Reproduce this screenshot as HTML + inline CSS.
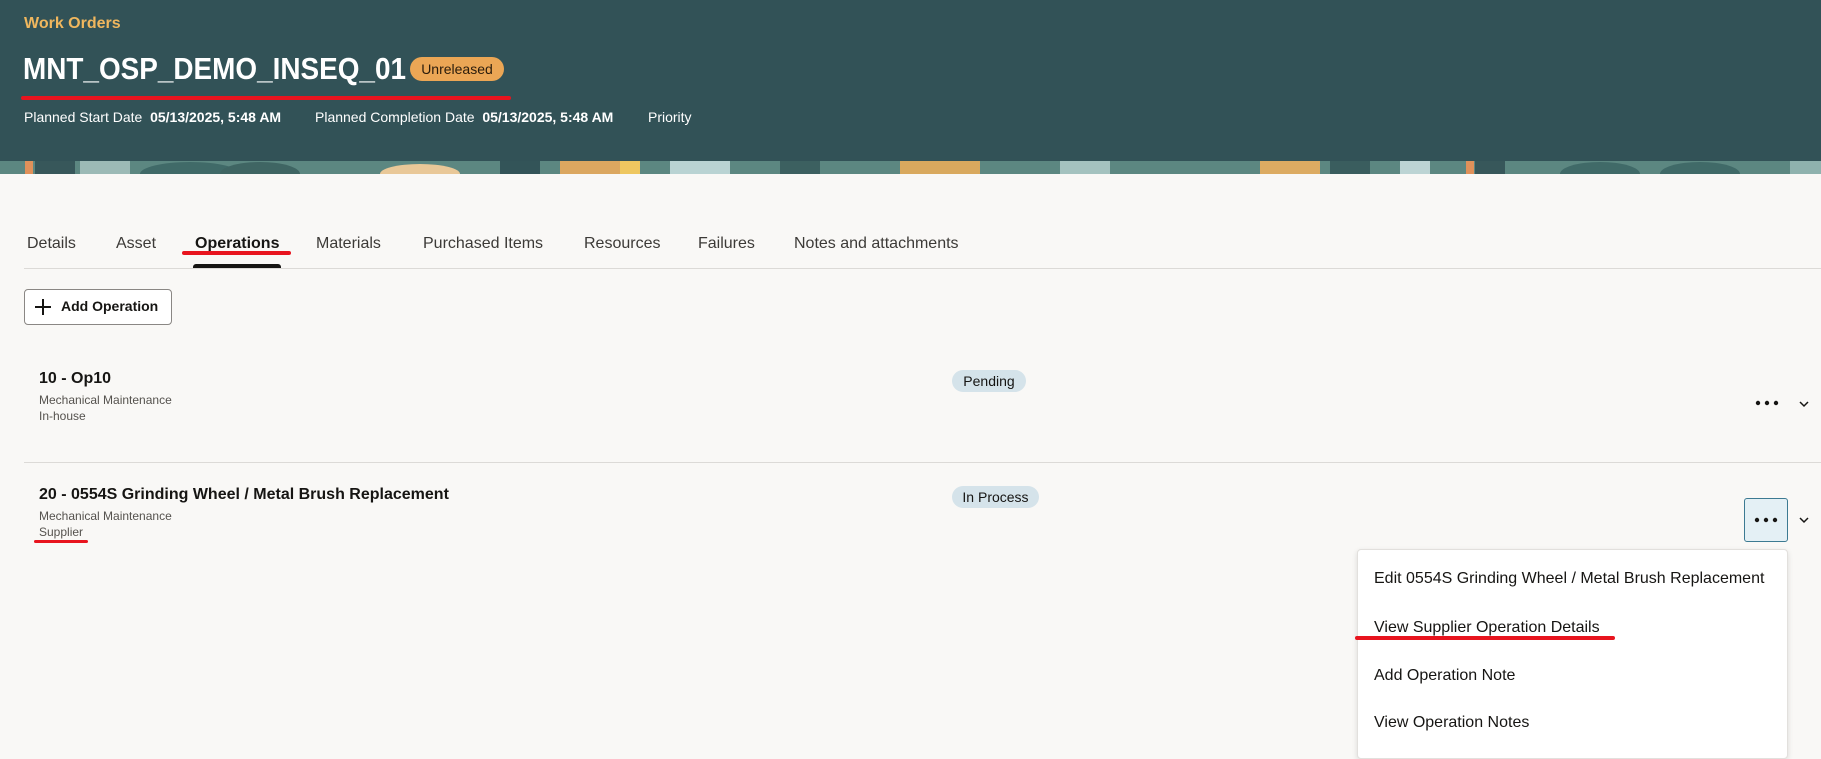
<!DOCTYPE html>
<html><head><meta charset="utf-8"><style>
*{margin:0;padding:0;box-sizing:border-box}
body{width:1821px;height:746px;overflow:hidden;background:#f9f8f6;font-family:"Liberation Sans",sans-serif;color:#161513;position:relative}
.hdr{position:absolute;left:0;top:0;width:1821px;height:161px;background:#325257}
.ban{position:absolute;left:0;top:161px;width:1821px;height:13px;background:#5a8580;overflow:hidden}
.a{position:absolute;white-space:nowrap}
.tab{position:absolute;top:235px;font-size:16px;color:#3c3a37}
.sub{font-size:12px;color:#55524e}
.menu div{position:absolute;left:16px;font-size:16px;color:#161513;white-space:nowrap}
.red{position:absolute;background:#e8141e;height:3px;border-radius:2px}
</style></head><body>
<div class="hdr"></div>
<div class="ban">
<svg width="1821" height="13">
<rect x="0" y="0" width="1821" height="13" fill="#5c8781"/>
<rect x="25" y="0" width="8" height="13" fill="#e0915a"/>
<rect x="35" y="0" width="40" height="13" fill="#37575a"/>
<rect x="80" y="0" width="50" height="13" fill="#9cbab6"/>
<ellipse cx="190" cy="13" rx="50" ry="12" fill="#406a68"/>
<ellipse cx="260" cy="13" rx="40" ry="12" fill="#3f6563"/>
<ellipse cx="420" cy="13" rx="40" ry="10" fill="#e9c898"/>
<rect x="500" y="0" width="40" height="13" fill="#335458"/>
<rect x="560" y="0" width="60" height="13" fill="#dba760"/>
<rect x="620" y="0" width="20" height="13" fill="#eec760"/>
<rect x="670" y="0" width="60" height="13" fill="#b9d3d3"/>
<rect x="780" y="0" width="40" height="13" fill="#3c6060"/>
<rect x="900" y="0" width="80" height="13" fill="#d9a95e"/>
<rect x="1060" y="0" width="50" height="13" fill="#a4c2bf"/>
<rect x="1260" y="0" width="60" height="13" fill="#dcab62"/>
<rect x="1330" y="0" width="40" height="13" fill="#3a5d5e"/>
<rect x="1400" y="0" width="30" height="13" fill="#bcd4d4"/>
<rect x="1466" y="0" width="8" height="13" fill="#e0915a"/>
<rect x="1475" y="0" width="30" height="13" fill="#37575a"/>
<ellipse cx="1600" cy="13" rx="40" ry="12" fill="#406a68"/>
<ellipse cx="1700" cy="13" rx="40" ry="12" fill="#406a68"/>
<rect x="1790" y="0" width="31" height="13" fill="#8fb2ae"/>
</svg></div>

<div class="a" style="left:24px;top:15px;font-size:16px;font-weight:bold;color:#f0b75e">Work Orders</div>
<div class="a" style="left:23px;top:51px;font-size:31px;font-weight:bold;color:#fff;transform:scaleX(0.9);transform-origin:0 0">MNT_OSP_DEMO_INSEQ_01</div>
<div class="a" style="left:410px;top:57px;width:94px;height:24px;border-radius:12px;background:#eba655;font-size:14px;line-height:24px;text-align:center;color:#2a1c0c">Unreleased</div>
<div class="red" style="left:21px;top:96px;width:490px;height:4px"></div>
<div class="a" style="left:24px;top:109px;font-size:14px;color:#fff">Planned Start Date&nbsp; <b>05/13/2025, 5:48 AM</b></div>
<div class="a" style="left:315px;top:109px;font-size:14px;color:#fff">Planned Completion Date&nbsp; <b>05/13/2025, 5:48 AM</b></div>
<div class="a" style="left:648px;top:109px;font-size:14px;color:#fff">Priority</div>

<div class="tab" style="left:27px">Details</div>
<div class="tab" style="left:116px">Asset</div>
<div class="tab" style="left:195px;color:#161513;font-weight:bold">Operations</div>
<div class="tab" style="left:316px">Materials</div>
<div class="tab" style="left:423px">Purchased Items</div>
<div class="tab" style="left:584px">Resources</div>
<div class="tab" style="left:698px">Failures</div>
<div class="tab" style="left:794px">Notes and attachments</div>
<div class="red" style="left:182px;top:251px;width:109px;height:4px"></div>
<div class="a" style="left:193px;top:264px;width:88px;height:4px;background:#161513;border-radius:3px 3px 0 0"></div>
<div class="a" style="left:24px;top:268px;width:1797px;height:1px;background:#dcdad7"></div>

<div class="a" style="left:24px;top:289px;width:148px;height:36px;border:1px solid #8a8784;border-radius:4px;background:#fff"></div>
<svg class="a" style="left:34px;top:298px" width="18" height="18"><path d="M9 1V17M1 9H17" stroke="#161513" stroke-width="2"/></svg>
<div class="a" style="left:61px;top:298px;font-size:14px;font-weight:bold">Add Operation</div>

<div class="a" style="left:39px;top:370px;font-size:16px;font-weight:bold">10 - Op10</div>
<div class="a sub" style="left:39px;top:393px">Mechanical Maintenance</div>
<div class="a sub" style="left:39px;top:409px">In-house</div>
<div class="a" style="left:952px;top:370px;width:74px;height:22px;border-radius:11px;background:#d5e3ea;font-size:14px;line-height:22px;text-align:center">Pending</div>
<svg class="a" style="left:1755px;top:400px" width="24" height="6"><circle cx="3" cy="3" r="2.2" fill="#161513"/><circle cx="12" cy="3" r="2.2" fill="#161513"/><circle cx="21" cy="3" r="2.2" fill="#161513"/></svg>
<svg class="a" style="left:1798px;top:400px" width="12" height="8"><path d="M2 2L6 6L10 2" stroke="#161513" stroke-width="1.5" fill="none"/></svg>
<div class="a" style="left:24px;top:462px;width:1797px;height:1px;background:#dcdad7"></div>

<div class="a" style="left:39px;top:486px;font-size:16px;font-weight:bold">20 - 0554S Grinding Wheel / Metal Brush Replacement</div>
<div class="a sub" style="left:39px;top:509px">Mechanical Maintenance</div>
<div class="a sub" style="left:39px;top:525px">Supplier</div>
<div class="red" style="left:34px;top:540px;width:54px"></div>
<div class="a" style="left:952px;top:486px;width:87px;height:22px;border-radius:11px;background:#d5e3ea;font-size:14px;line-height:22px;text-align:center">In Process</div>
<div class="a" style="left:1744px;top:498px;width:44px;height:44px;border:1px solid #3c7a92;border-radius:3px;background:#e4f0f5"></div>
<svg class="a" style="left:1754px;top:517px" width="24" height="6"><circle cx="3" cy="3" r="2.2" fill="#161513"/><circle cx="12" cy="3" r="2.2" fill="#161513"/><circle cx="21" cy="3" r="2.2" fill="#161513"/></svg>
<svg class="a" style="left:1798px;top:516px" width="12" height="8"><path d="M2 2L6 6L10 2" stroke="#161513" stroke-width="1.5" fill="none"/></svg>

<div class="a menu" style="left:1357px;top:549px;width:431px;height:210px;background:#fff;border:1px solid #e2e0dd;border-radius:4px;box-shadow:0 2px 6px rgba(0,0,0,0.12)">
<div style="top:20px">Edit 0554S Grinding Wheel / Metal Brush Replacement</div>
<div style="top:69px">View Supplier Operation Details</div>
<div style="top:117px">Add Operation Note</div>
<div style="top:164px">View Operation Notes</div>
</div>
<div class="red" style="left:1355px;top:636px;width:260px;height:4px"></div>
</body></html>
